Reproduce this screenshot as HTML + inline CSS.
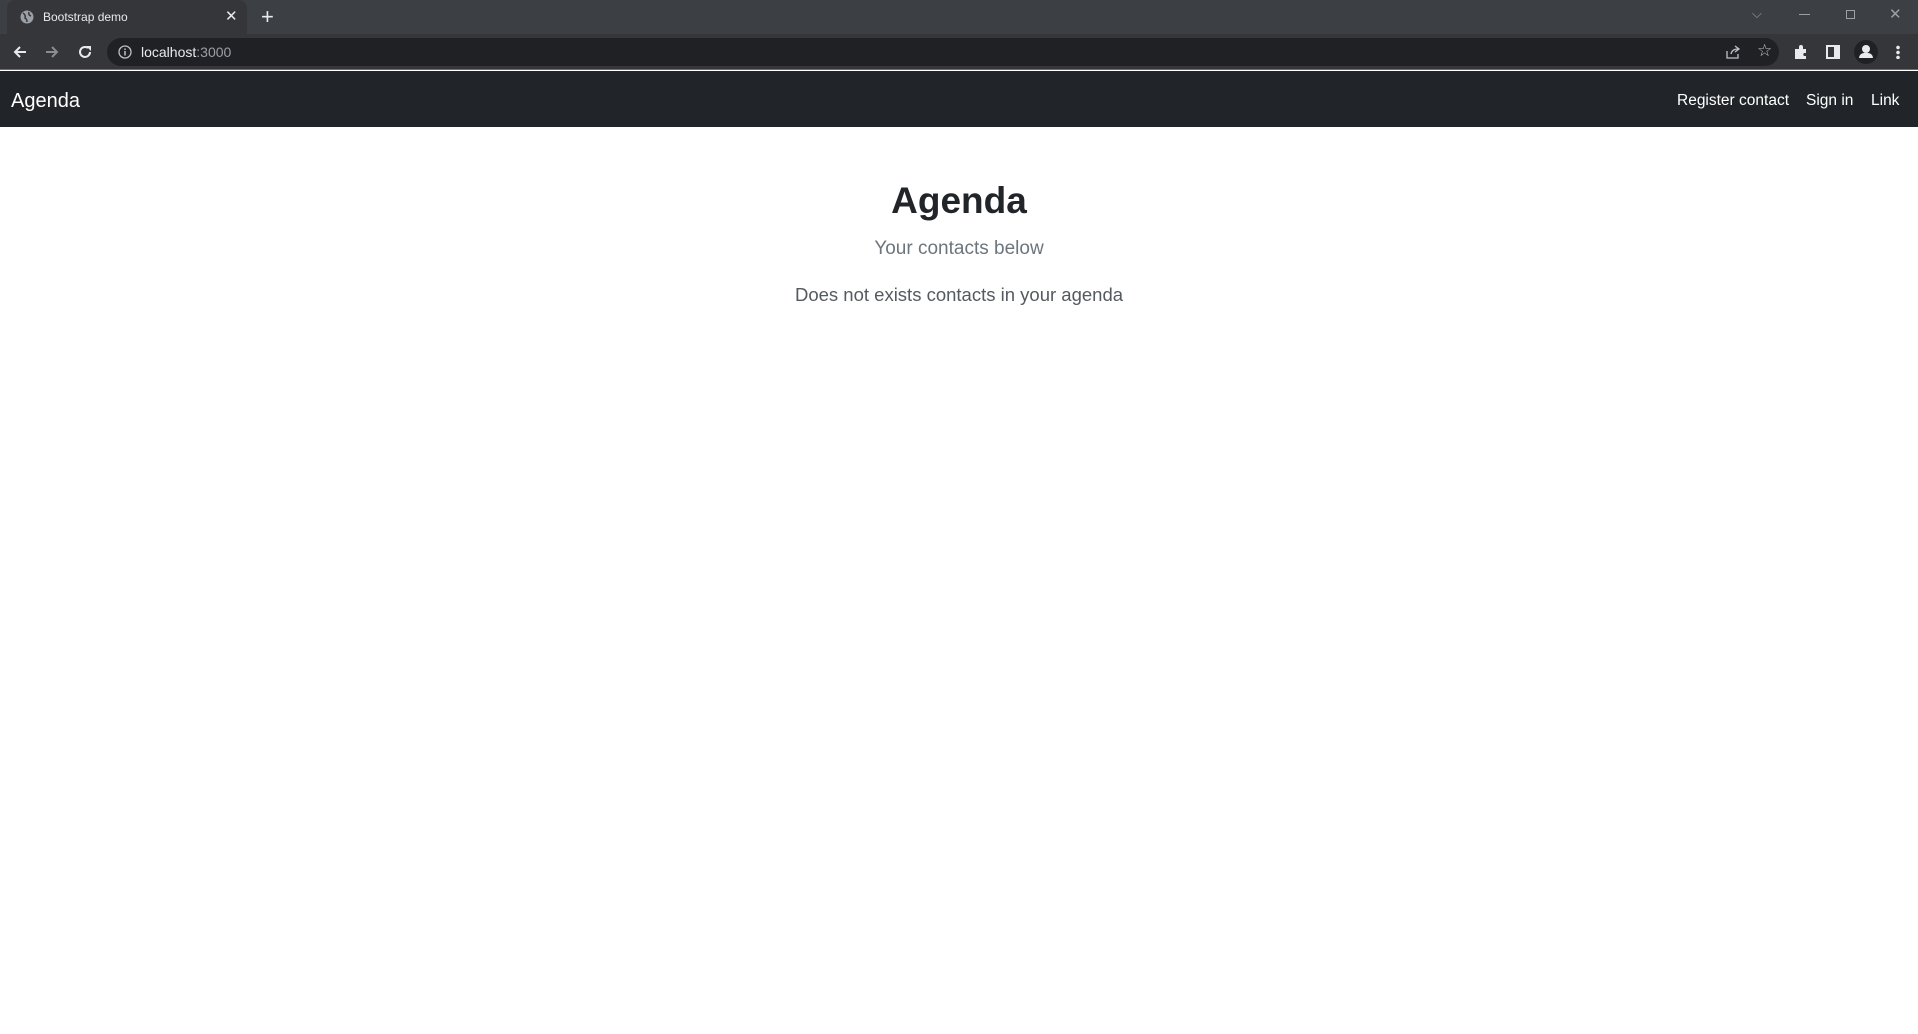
<!DOCTYPE html>
<html><head><meta charset="utf-8"><style>
*{margin:0;padding:0;box-sizing:border-box}
body{width:1918px;height:1034px;background:#fff;font-family:"Liberation Sans",sans-serif;position:relative;overflow:hidden}
.tabs{position:absolute;left:0;top:0;width:1918px;height:34px;background:#3c3f43}
.tab{position:absolute;left:7px;top:0;width:240px;height:34px;background:#35363a;border-radius:8px 8px 0 0;color:#e8eaed;font-size:12px}
.tool{position:absolute;left:0;top:34px;width:1918px;height:36px;background:#35363a;border-bottom:1px solid #6b6c6f}
.addr{position:absolute;left:107px;top:4px;width:1672px;height:28px;background:#202124;border-radius:14px;color:#e8eaed;font-size:14px}
.nav{position:absolute;left:0;top:71px;width:1918px;height:56px;background:#212529;color:#fff}
.c{position:absolute;left:0;width:1918px;text-align:center}
</style></head><body>
<div class="tabs">
 <div class="tab">
  <svg style="position:absolute;left:13px;top:10px" width="14" height="14" viewBox="0 0 14 14"><circle cx="7" cy="7" r="6.5" fill="#9aa0a6"/><path d="M3 3 Q6 5 5 8 Q7 9 7 12 M9 2 Q8 5 11 6" stroke="#35363a" stroke-width="1.5" fill="none"/></svg>
  <span style="position:absolute;left:36px;top:10px">Bootstrap demo</span>
  <span style="position:absolute;left:218px;top:7px;font-size:15px">✕</span>
 </div>
 <span style="position:absolute;left:261px;top:4px;color:#e8eaed;font-size:22px">+</span>
 <span style="position:absolute;left:1752px;top:6px;color:#9aa0a6;font-size:13px">⌵</span>
 <div style="position:absolute;left:1799px;top:14px;width:11px;height:1px;background:#9aa0a6"></div>
 <div style="position:absolute;left:1846px;top:10px;width:9px;height:9px;border:1px solid #9aa0a6"></div>
 <span style="position:absolute;left:1889px;top:5px;color:#9aa0a6;font-size:15px">✕</span>
</div>
<div class="tool">
 <svg style="position:absolute;left:12px;top:10px" width="16" height="16" viewBox="0 0 16 16"><path d="M14 8H3M8 3L3 8L8 13" stroke="#e8eaed" stroke-width="2" fill="none"/></svg>
 <svg style="position:absolute;left:44px;top:10px" width="16" height="16" viewBox="0 0 16 16"><path d="M2 8H13M8 3L13 8L8 13" stroke="#8a8c8f" stroke-width="2" fill="none"/></svg>
 <svg style="position:absolute;left:77px;top:10px" width="16" height="16" viewBox="0 0 16 16"><path d="M13 8A5 5 0 1 1 11 4" stroke="#e8eaed" stroke-width="2" fill="none"/><path d="M9 2H14V7Z" fill="#e8eaed"/></svg>
 <div class="addr">
  <svg style="position:absolute;left:11px;top:7px" width="14" height="14" viewBox="0 0 14 14"><circle cx="7" cy="7" r="6" stroke="#bdc1c6" stroke-width="1.3" fill="none"/><path d="M7 6V10.5M7 3.5V5" stroke="#bdc1c6" stroke-width="1.5"/></svg>
  <span style="position:absolute;left:34px;top:6px">localhost<span style="color:#9aa0a6">:3000</span></span>
  <svg style="position:absolute;left:1618px;top:6px" width="16" height="16" viewBox="0 0 16 16"><path d="M2 7V14H13V10M6 10Q7 5 13 5M10 2L14 5L10 8" stroke="#bdc1c6" stroke-width="1.3" fill="none"/></svg>
  <span style="position:absolute;left:1650px;top:3px;color:#bdc1c6;font-size:17px">☆</span>
 </div>
 <svg style="position:absolute;left:1793px;top:10px" width="16" height="16" viewBox="0 0 16 16"><path d="M2 5H6V3A2 2 0 0 1 10 3V5H13V9H11A2 2 0 0 0 11 12H13V15H2Z" fill="#e8eaed"/></svg>
 <div style="position:absolute;left:1826px;top:11px;width:14px;height:14px;border:2px solid #e8eaed;border-right-width:6px"></div>
 <div style="position:absolute;left:1854px;top:6px;width:24px;height:24px;border-radius:50%;background:#202124"><div style="position:absolute;left:8px;top:5px;width:8px;height:8px;border-radius:50%;background:#e8eaed"></div><div style="position:absolute;left:5px;top:13px;width:14px;height:5px;border-radius:6px 6px 0 0;background:#e8eaed"></div></div>
 <div style="position:absolute;left:1896px;top:11px;width:4px;height:14px;background:radial-gradient(circle,#e8eaed 1.6px,transparent 2px) 0 0/4px 5px"></div>
</div>
<div class="nav">
 <span style="position:absolute;left:11px;top:19px;font-size:20px">Agenda</span>
 <span style="position:absolute;left:1677px;top:21px;font-size:15.5px">Register contact</span>
 <span style="position:absolute;left:1806px;top:21px;font-size:15.5px">Sign in</span>
 <span style="position:absolute;left:1871px;top:21px;font-size:15.5px">Link</span>
</div>
<div class="c" style="top:180px;font-size:37px;font-weight:bold;color:#212529">Agenda</div>
<div class="c" style="top:238px;font-size:19px;color:#6c757d">Your contacts below</div>
<div class="c" style="top:284px;font-size:18.5px;color:#555a60">Does not exists contacts in your agenda</div>
</body></html>
